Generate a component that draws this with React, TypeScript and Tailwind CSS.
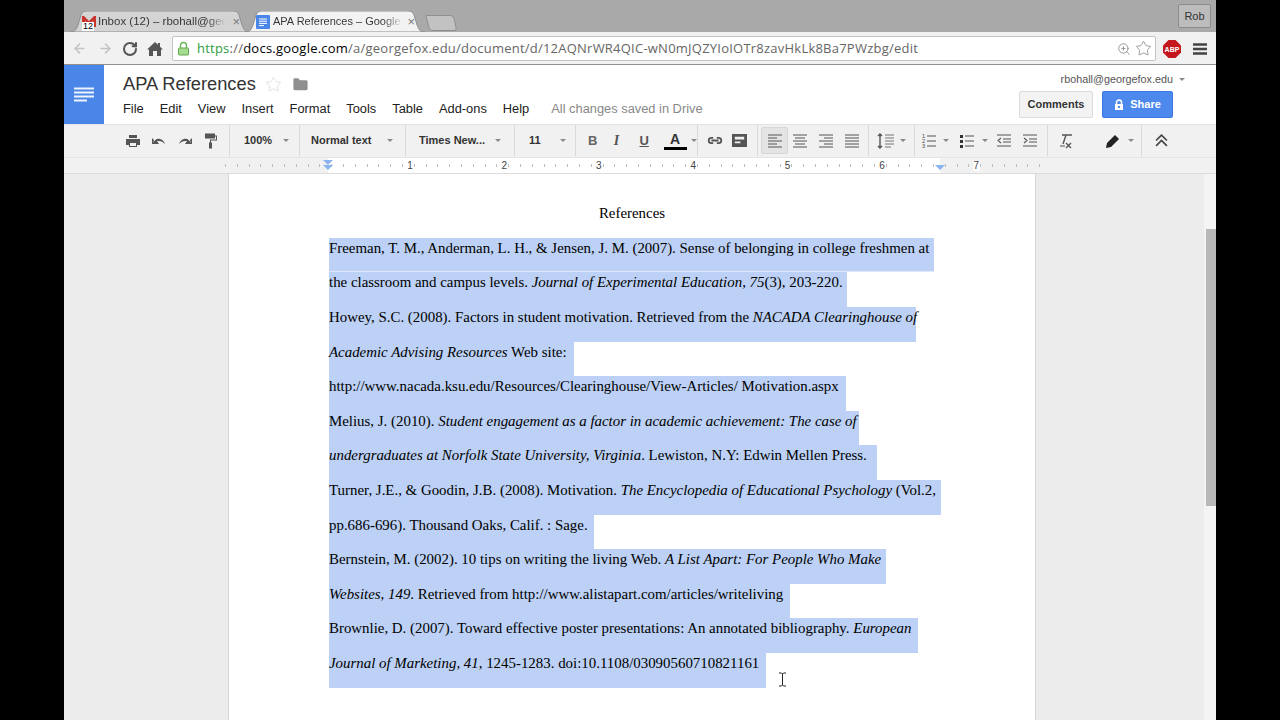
import React from "react";
import { ArrowLeft, ArrowRight, RotateCw, Star, ZoomIn, Folder } from "lucide-react";

const sans = "font-['Liberation_Sans',Arial,sans-serif]";

type Run = { t: string; i?: boolean };
const lines: { w: string; runs: Run[] }[] = [
  { w: "w-[605px] border-b border-[#dfe8fa]", runs: [{ t: "Freeman, T. M., Anderman, L. H., & Jensen, J. M. (2007). Sense of belonging in college freshmen at" }] },
  { w: "w-[518px]", runs: [{ t: "the classroom and campus levels. " }, { t: "Journal of Experimental Education", i: true }, { t: ", " }, { t: "75", i: true }, { t: "(3), 203-220." }] },
  { w: "w-[587px]", runs: [{ t: "Howey, S.C. (2008). Factors in student motivation. Retrieved from the " }, { t: "NACADA Clearinghouse of", i: true }] },
  { w: "w-[245px]", runs: [{ t: "Academic Advising Resources", i: true }, { t: " Web site:" }] },
  { w: "w-[517px]", runs: [{ t: "http://www.nacada.ksu.edu/Resources/Clearinghouse/View-Articles/ Motivation.aspx" }] },
  { w: "w-[530px]", runs: [{ t: "Melius, J. (2010). " }, { t: "Student engagement as a factor in academic achievement: The case of", i: true }] },
  { w: "w-[548px]", runs: [{ t: "undergraduates at Norfolk State University, Virginia", i: true }, { t: ". Lewiston, N.Y: Edwin Mellen Press." }] },
  { w: "w-[612px]", runs: [{ t: "Turner, J.E., & Goodin, J.B. (2008). Motivation. " }, { t: "The Encyclopedia of Educational Psychology", i: true }, { t: " (Vol.2," }] },
  { w: "w-[265px]", runs: [{ t: "pp.686-696). Thousand Oaks, Calif. : Sage." }] },
  { w: "w-[557px]", runs: [{ t: "Bernstein, M. (2002). 10 tips on writing the living Web. " }, { t: "A List Apart: For People Who Make", i: true }] },
  { w: "w-[461px]", runs: [{ t: "Websites, 149", i: true }, { t: ". Retrieved from http://www.alistapart.com/articles/writeliving" }] },
  { w: "w-[589px]", runs: [{ t: "Brownlie, D. (2007). Toward effective poster presentations: An annotated bibliography. " }, { t: "European", i: true }] },
  { w: "w-[437px]", runs: [{ t: "Journal of Marketing, 41", i: true }, { t: ", 1245-1283. doi:10.1108/03090560710821161" }] },
];

function Caret({ className = "" }: { className?: string }) {
  return <span className={`inline-block h-0 w-0 shrink-0 border-x-[3px] border-t-[3px] border-x-transparent border-t-[#8a8a8a] ${className}`} />;
}

function Tab({ active, w, children }: { active?: boolean; w: string; children: React.ReactNode }) {
  return (
    <div className={`relative flex h-[21px] items-center ${w} ${active ? "z-10" : ""}`}>
      <svg className="absolute inset-0 h-full w-full" viewBox="0 0 180 21" preserveAspectRatio="none">
        <path
          d="M0 21 C5 21 6 19 8 14 L11 4 C12 1 14 0 17 0 L163 0 C166 0 168 1 169 4 L172 14 C174 19 175 21 180 21 Z"
          fill={active ? "#f2f2f2" : "#d4d4d4"}
          stroke="#8f8f8f"
          strokeWidth="1"
        />
      </svg>
      <div className="relative flex w-full items-center pl-[11px] pr-[10px]">{children}</div>
    </div>
  );
}

function GmailIcon() {
  return (
    <span className="relative mr-px h-[16px] w-[16px] shrink-0">
      <svg viewBox="0 0 16 16" className="h-full w-full">
        <path d="M1 13V2h2l5 5 5-5h2v11h-3V7L8 11 4 7v6z" fill="#c9342c" />
      </svg>
      <span className="absolute bottom-[-1px] left-[1px] bg-white px-px text-[9px] leading-[9px] text-black">12</span>
    </span>
  );
}

function DocsIcon({ className = "" }: { className?: string }) {
  return (
    <svg viewBox="0 0 14 14" className={className}>
      <rect width="14" height="14" rx="1" fill="#4a86e8" />
      <path d="M3 4h8M3 6.200h8M3 8.400h8M3 10.600h5" stroke="#fff" strokeWidth="1" />
    </svg>
  );
}

function BrowserBar() {
  return (
    <div className={`${sans}`}>
      <div className="flex h-[32px] items-end justify-between bg-[#a9a9a9] pl-[6px] pr-[5px]">
        <div className="flex items-end">
          <Tab w="w-[180px]">
            <GmailIcon />
            <span className="w-[128px] whitespace-nowrap bg-gradient-to-r from-[#333] from-85% to-transparent bg-clip-text text-[11.5px] text-transparent">Inbox (12) – rbohall@geor</span>
            <span className="ml-auto text-[13px] leading-none text-[#777]">×</span>
          </Tab>
          <div className="-ml-[5px]">
            <Tab active w="w-[180px]">
              <DocsIcon className="mr-[3px] h-[14px] w-[14px] shrink-0" />
              <span className="w-[130px] whitespace-nowrap bg-gradient-to-r from-[#333] from-85% to-transparent bg-clip-text text-[11px] text-transparent">APA References – Google</span>
              <span className="ml-auto text-[13px] leading-none text-[#777]">×</span>
            </Tab>
          </div>
          <svg viewBox="0 0 32 16" className="mb-px h-[16px] w-[32px]">
            <path d="M1 .5h24c2 0 3 1 4 3l2 9c.4 2-.500 3-2 3H8c-2 0-3-1-4-3L1 1z" fill="#c2c2c2" stroke="#8f8f8f" />
          </svg>
        </div>
        <div className="mb-[4px] flex h-[24px] w-[33px] items-center justify-center rounded-[2px] border border-[#8c8c8c] bg-[#bcbcbc] text-[11px] text-[#333]">Rob</div>
      </div>
      <div className="flex h-[33px] items-center border-b border-[#8f8f8f] bg-[#f1f1f1] pl-[8px] pt-px">
        <ArrowLeft size={15} strokeWidth={2.5} className="text-[#c4c4c4]" />
        <ArrowRight size={15} strokeWidth={2.5} className="ml-[11px] text-[#c4c4c4]" />
        <RotateCw size={16} strokeWidth={3} className="ml-[9px] text-[#555]" />
        <svg viewBox="0 0 16 16" className="ml-[9px] h-[16px] w-[16px]">
          <path d="M8 1l3 2.800V2h2v3.700L16 8.500h-2V15h-4v-5H6v5H2V8.500H0z" fill="#555" />
        </svg>
        <div className="ml-[9px] flex h-[25px] w-[984px] shrink-0 items-center rounded-[2px] border border-[#c4c4c4] bg-white pl-[4px] pr-[3px]">
          <svg viewBox="0 0 13 15" className="h-[15px] w-[13px] shrink-0">
            <path d="M3.500 7V4.500a3 3 0 016 0V7" stroke="#6fb35f" strokeWidth="1.400" fill="none" />
            <rect x="1.500" y="7" width="10" height="7" rx="1" fill="#a6dc8f" stroke="#5ea84d" />
          </svg>
          <span className="ml-[7px] font-['Open_Sans',sans-serif] text-[13px] whitespace-nowrap tracking-[0.23px] text-[#666]">
            <span className="text-[#2e9e3f]">https</span>
            <span>://</span>
            <span className="text-black">docs.google.com</span>
            /a/georgefox.edu/document/d/12AQNrWR4QIC-wN0mJQZYIoIOTr8zavHkLk8Ba7PWzbg/edit
          </span>
          <ZoomIn size={14} strokeWidth={1.5} className="ml-auto text-[#8a8a8a]" />
          <Star size={17} strokeWidth={1.2} className="ml-[4px] text-[#8a8a8a]" />
        </div>
        <svg viewBox="0 0 18 18" className="ml-[7px] h-[18px] w-[18px] shrink-0">
          <path d="M5.500 0h7L18 5.500v7L12.500 18h-7L0 12.500v-7z" fill="#c4161c" />
          <text x="9" y="11.500" textAnchor="middle" fontSize="7" fontWeight="700" fill="#fff" fontFamily="Liberation Sans, sans-serif">ABP</text>
        </svg>
        <svg viewBox="0 0 14 12" className="ml-[12px] h-[12px] w-[14px] shrink-0">
          <path d="M0 1.500h14M0 6h14M0 10.500h14" stroke="#444" strokeWidth="2.400" />
        </svg>
      </div>
    </div>
  );
}

function DocsHeader() {
  const menus = ["File", "Edit", "View", "Insert", "Format", "Tools", "Table", "Add-ons", "Help"];
  return (
    <div className={`flex h-[59px] bg-white ${sans}`}>
      <div className="flex w-[40px] shrink-0 items-center justify-center bg-[#4a86e8]">
        <svg viewBox="0 0 20 16" className="h-[16px] w-[20px]">
          <path d="M0 1.500h20M0 5.500h20M0 9.500h20M0 13.500h13" stroke="#fff" strokeWidth="2" opacity="0.9" />
        </svg>
      </div>
      <div className="ml-[19px] flex-1 pt-[7px]">
        <div className="flex h-[24px] items-center">
          <span className="text-[18.3px] leading-none text-[#333]">APA References</span>
          <Star size={17} strokeWidth={1.2} className="ml-[9px] text-[#dcdcdc]" />
          <Folder size={17} fill="#8f8f8f" strokeWidth={0} className="ml-[10px]" />
        </div>
        <div className="mt-[3px] flex items-center text-[12.85px] text-[#222]">
          <div className="flex gap-[16px]">
            {menus.map((m) => (
              <span key={m}>{m}</span>
            ))}
          </div>
          <span className="ml-[22px] text-[#888]">All changes saved in Drive</span>
        </div>
      </div>
      <div className="flex w-[200px] shrink-0 flex-col items-end pr-[43px] pt-[6px]">
        <div className="-mr-[12px] flex items-center text-[10.8px] text-[#555]">
          rbohall@georgefox.edu
          <Caret className="ml-[6px]" />
        </div>
        <div className="mt-[4px] flex">
          <div className="flex h-[27px] w-[74px] items-center justify-center rounded-[2px] border border-[#dcdcdc] bg-[#f3f3f3] text-[11px] font-bold text-[#333]">Comments</div>
          <div className="ml-[9px] flex h-[27px] w-[71px] items-center justify-center gap-[6px] rounded-[2px] border border-[#3b78e7] bg-[#4d88ec] text-[11px] font-bold text-white">
            <svg viewBox="0 0 10 12" className="h-[12px] w-[10px]">
              <path d="M2.500 5V3.500a2.500 2.500 0 015 0V5" stroke="#fff" strokeWidth="1.500" fill="none" />
              <path d="M1 5h8v6H1zM4 7v2h2V7z" fill="#fff" fillRule="evenodd" />
            </svg>
            Share
          </div>
        </div>
      </div>
    </div>
  );
}

function Sep() {
  return <div className="w-px shrink-0 self-stretch bg-[#dadada]" />;
}

function Drop({ className, label }: { className: string; label: string }) {
  return (
    <div className={`flex items-center justify-between ${className} text-[11px] font-bold text-[#333]`}>
      <span className="whitespace-nowrap">{label}</span>
      <Caret />
    </div>
  );
}

function Lines({ d, className = "" }: { d: string; className?: string }) {
  return (
    <svg viewBox="0 0 16 16" className={`h-[16px] w-[16px] shrink-0 ${className}`}>
      <path d={d} stroke="#555" strokeWidth="1.1" fill="none" />
    </svg>
  );
}

function Toolbar() {
  return (
    <div className={`flex h-[34px] items-center border-y border-[#e4e4e4] bg-[#f1f1f1] pb-px pl-[61px] ${sans}`}>
      <div className="flex w-[104px] shrink-0 items-center gap-[10px]">
        <svg viewBox="0 0 16 16" className="h-[16px] w-[16px]"><path d="M4 2h8v3H4zM1 6h14v6h-3v2H4v-2H1zM5 10v3h6v-3z" fill="#555" fillRule="evenodd" /></svg>
        <svg viewBox="0 0 16 16" className="h-[16px] w-[16px]"><path d="M2 11c1-4 4-6 7-5 2 .6 4 2 5 5-2-2-4-3-6-3L6 8l2 3H1V5l2 2z" fill="#555" /></svg>
        <svg viewBox="0 0 16 16" className="h-[16px] w-[16px]"><path d="M14 11c-1-4-4-6-7-5-2 .6-4 2-5 5 2-2 4-3 6-3l2 0-2 3h7V5l-2 2z" fill="#555" /></svg>
        <svg viewBox="0 0 16 16" className="h-[17px] w-[16px]"><path d="M2 1h10v5H2zM12 3h2v5H8v2h1v6H6v-6h1V7h6V4h-1z" fill="#555" /></svg>
      </div>
      <Sep />
      <Drop className="w-[69px] pl-[14px] pr-[10px]" label="100%" />
      <Sep />
      <Drop className="w-[105px] pl-[11px] pr-[12px]" label="Normal text" />
      <Sep />
      <Drop className="w-[108px] pl-[13px] pr-[13px]" label="Times New..." />
      <Sep />
      <Drop className="w-[60px] pl-[14px] pr-[9px]" label="11" />
      <Sep />
      <div className="flex w-[121px] shrink-0 items-center pl-[12px]">
        <span className="w-[26px] text-[13px] font-bold text-[#666]">B</span>
        <span className="w-[26px] font-['Liberation_Serif',serif] text-[14px] font-bold italic text-[#555]">I</span>
        <span className="w-[24px] text-[13px] font-bold text-[#555] underline">U</span>
        <span className="flex w-[24px] flex-col items-center">
          <span className="text-[14px] leading-[14px] font-bold text-[#333]">A</span>
          <span className="mt-[1px] h-[3px] w-[23px] bg-black" />
        </span>
        <Caret className="ml-[4px]" />
      </div>
      <Sep />
      <div className="flex w-[59px] shrink-0 items-center gap-[8px] pl-[8px]">
        <svg viewBox="0 0 18 10" className="h-[9px] w-[18px]"><path d="M7 2H5a3 3 0 000 6h2M11 2h2a3 3 0 010 6h-2M5 5h8" stroke="#555" strokeWidth="2" fill="none" /></svg>
        <svg viewBox="0 0 16 16" className="h-[15px] w-[15px]"><path d="M0 1h16v14H0zM3 4v3h10V4zM3 9v2h6V9z" fill="#555" fillRule="evenodd" /></svg>
      </div>
      <Sep />
      <div className="flex w-[110px] shrink-0 items-center gap-[10px] pl-[3px]">
        <span className="flex h-[27px] w-[27px] items-center justify-center rounded-[2px] border border-[#d6d6d6] bg-[#e4e4e4]">
          <Lines d="M1 2h14M1 5h9M1 8h14M1 11h9M1 14h14" />
        </span>
        <Lines d="M1 2h14M3 5h10M1 8h14M3 11h10M1 14h14" className="-ml-[6px]" />
        <Lines d="M1 2h14M6 5h9M1 8h14M6 11h9M1 14h14" />
        <Lines d="M1 2h14M1 5h14M1 8h14M1 11h14M1 14h14" />
      </div>
      <Sep />
      <div className="flex w-[45px] shrink-0 items-center justify-center gap-[5px]">
        <svg viewBox="0 0 18 16" className="h-[16px] w-[18px]"><path d="M3 1v14M1 3l2-2 2 2M1 13l2 2 2-2" stroke="#555" strokeWidth="1.4" fill="none" /><path d="M8 2h9M8 5h9M8 8h9M8 11h9M8 14h6" stroke="#777" strokeWidth="1.1" /></svg>
        <Caret />
      </div>
      <Sep />
      <div className="flex w-[132px] shrink-0 items-center pl-[6px]">
        <svg viewBox="0 0 16 16" className="h-[16px] w-[16px] shrink-0">
          <path d="M6 3h9M6 8h9M6 13h9" stroke="#555" strokeWidth="1.1" />
          <text x="1" y="5" fontSize="5.500" fill="#444" fontFamily="Liberation Sans, sans-serif">1</text>
          <text x="1" y="10" fontSize="5.500" fill="#444" fontFamily="Liberation Sans, sans-serif">2</text>
          <text x="1" y="15" fontSize="5.500" fill="#444" fontFamily="Liberation Sans, sans-serif">3</text>
        </svg>
        <Caret className="ml-[6px]" />
        <svg viewBox="0 0 16 16" className="ml-[10px] h-[16px] w-[16px] shrink-0"><path d="M6 3h9M6 8h9M6 13h9" stroke="#555" strokeWidth="1.1" /><path d="M1 2h3v3H1zM1 7h3v3H1zM1 12h3v3H1z" fill="#333" /></svg>
        <Caret className="ml-[7px]" />
        <Lines d="M1 2h14M7 6h8M7 9h8M1 13h14M5 5L2 7.500 5 10" className="ml-[8px]" />
        <Lines d="M1 2h14M7 6h8M7 9h8M1 13h14M2 5l3 2.500L2 10" className="ml-[10px]" />
      </div>
      <Sep />
      <div className="flex w-[34px] shrink-0 items-center justify-center">
        <svg viewBox="0 0 16 16" className="h-[16px] w-[16px]"><path d="M5 2h10M9 2L6 11" stroke="#555" strokeWidth="1.4" fill="none" /><path d="M3 13h5" stroke="#555" /><path d="M9 10l5 5M14 10l-5 5" stroke="#555" strokeWidth="1.4" /></svg>
      </div>
      <div className="flex w-[59px] shrink-0 items-center gap-[7px] pl-[23px]">
        <svg viewBox="0 0 16 16" className="h-[16px] w-[16px] shrink-0"><path d="M1 15l1-5 8-8 4 4-8 8z" fill="#222" /></svg>
        <Caret />
      </div>
      <Sep />
      <div className="flex w-[38px] shrink-0 items-center justify-center">
        <svg viewBox="0 0 12 12" className="h-[13px] w-[13px]"><path d="M1 6l5-5 5 5M1 11l5-5 5 5" stroke="#444" strokeWidth="1.5" fill="none" /></svg>
      </div>
    </div>
  );
}

function Ruler() {
  const nums = ["", "1", "2", "3", "4", "5", "6", "7"];
  return (
    <div className={`flex h-[16px] items-center border-b border-[#dcdcdc] bg-[#f1f1f1] pl-[161px] ${sans}`}>
      <div className="relative h-[15px] w-[815px]">
        <div className="absolute inset-y-0 left-[103px] w-[612px] bg-white" />
        <div className="absolute inset-x-0 top-[6px] h-[3px] bg-[repeating-linear-gradient(90deg,#bdbdbd_0,#bdbdbd_1px,transparent_1px,transparent_11.8px)]" />
        <div className="relative flex h-full">
          {nums.map((n, i) => (
            <span key={i} className="flex w-[94.4px] shrink-0 items-center justify-end text-[10px] leading-none text-[#444]">
              <span className={n ? "bg-white px-px" : ""}>{n}</span>
            </span>
          ))}
        </div>
        <span className="absolute top-[2px] left-[98px] h-0 w-0 border-x-[5px] border-t-[5px] border-x-transparent border-t-[#8ab4f0]" />
        <span className="absolute top-[7px] left-[98px] h-0 w-0 border-x-[5px] border-t-[5px] border-x-transparent border-t-[#8ab4f0]" />
        <span className="absolute top-[7px] left-[710px] h-0 w-0 border-x-[5px] border-t-[5px] border-x-transparent border-t-[#8ab4f0]" />
      </div>
    </div>
  );
}

function Page() {
  return (
    <div className="flex min-h-0 flex-1 overflow-hidden bg-[#ececec]">
      <div className="flex flex-1 justify-center pr-[4px]">
        <div className="h-[600px] w-[808px] border-x border-[#d4d4d4] bg-white pt-[26.8px] pl-[100px] font-['Liberation_Serif',serif] text-[14.9px] text-black">
          <div className="-ml-[100px] h-[37px] text-center leading-[24px]">References</div>
          <div className="flex flex-col">
            {lines.map((l, i) => (
              <div key={i} className={`relative h-[34.6px] whitespace-nowrap bg-[#bcd1f5] pt-[2px] leading-[17px] ${l.w}`}>
                {l.runs.map((r, j) => (r.i ? <em key={j}>{r.t}</em> : <span key={j}>{r.t}</span>))}
              </div>
            ))}
          </div>
          <svg viewBox="0 0 9 15" className="absolute top-[672px] left-[778px] h-[15px] w-[9px]">
            <path d="M1 1h2.500L4.500 2 5.500 1H8M4.500 2v11M1 14h2.500l1-1 1 1H8" stroke="#222" strokeWidth="1" fill="none" />
          </svg>
        </div>
      </div>
      <div className="flex w-[12px] shrink-0 flex-col bg-[#f4f4f4] pl-[2px]">
        <div className="mt-[55px] h-[277px] w-full bg-[#b8b8b8]" />
      </div>
    </div>
  );
}

export default function App() {
  return (
    <div className="flex h-[720px] w-[1280px] justify-center overflow-hidden bg-black">
      <div className="flex h-full w-[1152px] flex-col">
        <BrowserBar />
        <DocsHeader />
        <Toolbar />
        <Ruler />
        <Page />
      </div>
    </div>
  );
}
